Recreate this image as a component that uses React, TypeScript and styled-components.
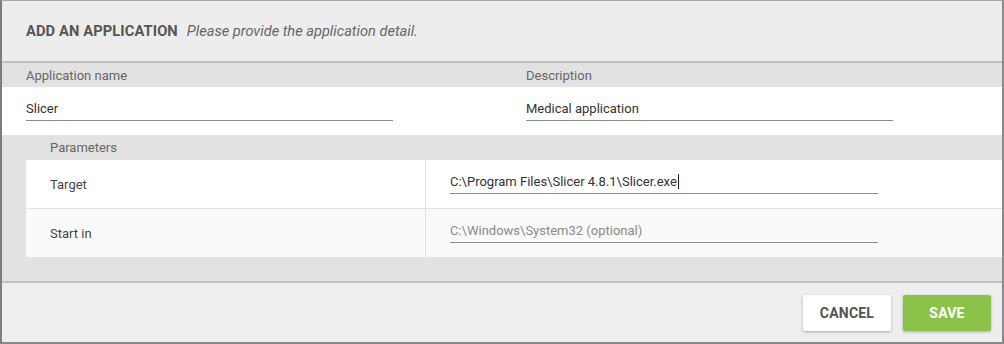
import React from "react";
import styled, { createGlobalStyle } from "styled-components";

const Global = createGlobalStyle`
  html, body { margin: 0; padding: 0; background: #ffffff; }
  body { font-family: Roboto, "Liberation Sans", Arial, sans-serif; }
  * { box-sizing: border-box; }
`;

const Frame = styled.div`
  width: 1004px;
  height: 344px;
  border-left: 2px solid #7d7d7d;
  border-right: 2px solid #8a8a8a;
  border-top: 1px solid #a8a8a8;
  border-bottom: 2px solid #8a8a8a;
  display: flex;
  flex-direction: column;
  background: #ededed;
  overflow: hidden;
`;

const Header = styled.div`
  height: 62px;
  display: flex;
  align-items: center;
  padding: 0 0 0 24px;
  background: #ededed;
  border-bottom: 2px solid #bfbfbf;
  flex-shrink: 0;
`;

const Title = styled.span`
  font-size: 14.7px;
  font-weight: 700;
  color: #555555;
  letter-spacing: 0.1px;
`;

const Subtitle = styled.span`
  margin-left: 9px;
  font-size: 14.6px;
  font-style: italic;
  color: #666666;
`;

const Grid = styled.div<{ $bg: string; $h: number }>`
  display: grid;
  grid-template-columns: 500px 500px;
  padding-left: 24px;
  height: ${(p) => p.$h}px;
  background: ${(p) => p.$bg};
  align-items: ${(p) => (p.$h > 30 ? "start" : "center")};
  flex-shrink: 0;
`;

const Label = styled.span`
  font-size: 13px;
  color: #666666;
`;

const Field = styled.div<{ $w: number }>`
  width: ${(p) => p.$w}px;
  height: 25px;
  margin-top: 9px;
  border-bottom: 1px solid #8c8c8c;
  display: flex;
  align-items: center;
  font-size: 13px;
  color: #333333;
`;

const Placeholder = styled.span`
  color: #8a8a8a;
`;

const Caret = styled.span`
  display: inline-block;
  width: 1px;
  height: 15px;
  background: #1a1a4a;
  margin-left: 1px;
`;

const Params = styled.div`
  background: #e2e2e2;
  padding: 0 0 24px 24px;
  flex-shrink: 0;
  border-bottom: 2px solid #bfbfbf;
`;

const ParamsTitle = styled.div`
  height: 25px;
  display: flex;
  align-items: center;
  padding-left: 24px;
  font-size: 13px;
  color: #666666;
`;

const Table = styled.div`
  display: flex;
  flex-direction: column;
`;

const Row = styled.div<{ $bg: string; $border?: boolean }>`
  display: grid;
  grid-template-columns: 400px 1fr;
  height: ${(p) => (p.$border ? 49 : 48)}px;
  background: ${(p) => p.$bg};
  border-bottom: ${(p) => (p.$border ? "1px solid #e0e0e0" : "none")};
`;

const Cell = styled.div`
  display: flex;
  align-items: center;
  padding-left: 24px;
  font-size: 13px;
  color: #444444;
  border-right: 1px solid #e0e0e0;
`;

const InputCell = styled.div`
  padding-left: 24px;
`;

const Footer = styled.div`
  flex: 1;
  display: flex;
  justify-content: flex-end;
  align-items: flex-start;
  gap: 12px;
  padding: 12px 11px 0 0;
  background: #eeeeee;
`;

const Button = styled.button<{ $primary?: boolean }>`
  width: 88px;
  height: 36px;
  border: none;
  border-radius: 2px;
  font-family: Roboto, "Liberation Sans", Arial, sans-serif;
  font-size: 14px;
  font-weight: 700;
  letter-spacing: 0.2px;
  background: ${(p) => (p.$primary ? "#8bc34a" : "#ffffff")};
  color: ${(p) => (p.$primary ? "#ffffff" : "#555555")};
  box-shadow: 0 1px 3px rgba(0, 0, 0, 0.28);
  cursor: pointer;
`;

export default function App() {
  return (
    <>
      <Global />
      <Frame>
        <Header>
          <Title>ADD AN APPLICATION</Title>
          <Subtitle>Please provide the application detail.</Subtitle>
        </Header>
        <Grid $bg="#e2e2e2" $h={24}>
          <Label>Application name</Label>
          <Label>Description</Label>
        </Grid>
        <Grid $bg="#ffffff" $h={48}>
          <Field $w={367}>Slicer</Field>
          <Field $w={367}>Medical application</Field>
        </Grid>
        <Params>
          <ParamsTitle>Parameters</ParamsTitle>
          <Table>
            <Row $bg="#ffffff" $border>
              <Cell>Target</Cell>
              <InputCell>
                <Field $w={428}>
                  C:\Program Files\Slicer 4.8.1\Slicer.exe
                  <Caret />
                </Field>
              </InputCell>
            </Row>
            <Row $bg="#fafafa">
              <Cell>Start in</Cell>
              <InputCell>
                <Field $w={428}>
                  <Placeholder>C:\Windows\System32 (optional)</Placeholder>
                </Field>
              </InputCell>
            </Row>
          </Table>
        </Params>
        <Footer>
          <Button>CANCEL</Button>
          <Button $primary>SAVE</Button>
        </Footer>
      </Frame>
    </>
  );
}
